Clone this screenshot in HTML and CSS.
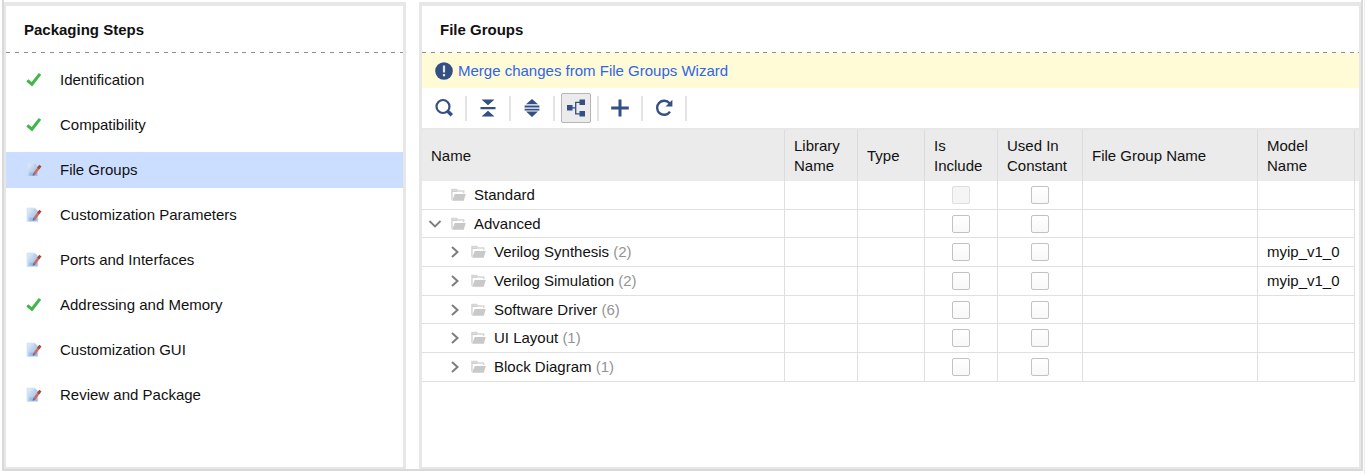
FILE: index.html
```html
<!DOCTYPE html>
<html lang="en">
<head>
<meta charset="utf-8">
<meta name="viewport" content="width=device-width, initial-scale=1">
<title>Package IP - File Groups</title>
<link rel="stylesheet" href="styles.css">
</head>
<body>
<svg class="symbols" aria-hidden="true">
  <defs>
    <linearGradient id="page-fill" x1="0" y1="0" x2="1" y2="1">
      <stop offset="0" stop-color="#e6f0fa"/><stop offset="1" stop-color="#8db4e2"/>
    </linearGradient>
  </defs>
  <symbol id="i-check" viewBox="0 0 16 16"><path d="M1.3 8.4 5.9 12.2 14 1.9" fill="none" stroke="#43b649" stroke-width="3.1"/></symbol>
  <symbol id="i-edit" viewBox="0 0 16 16">
    <path d="M1.2 1.2h7.6l3 3v10.3H1.2z" fill="url(#page-fill)" stroke="#cfdff0" stroke-width="1"/>
    <path d="M8.5 1.2v3.2h3.3z" fill="#b3cbe6"/>
    <path d="M3.5 10.5h7.8v3.5H3.5z" fill="#9bbce4"/>
    <path d="M8.2 12 13.2 5.2" stroke="#cd6a62" stroke-width="2.6"/>
    <path d="M12.2 6.4 14.4 3.6" stroke="#9c4a38" stroke-width="2.8"/>
    <path d="M6.6 13.8l.5-2.8 2.2 1.7z" fill="#5c6f92"/>
  </symbol>
  <symbol id="i-folder" viewBox="0 0 16 14">
    <path d="M1 12V1.2h5l1.3 1.6h6.2V5" fill="none" stroke="#d6d6d6" stroke-width="1.6"/>
    <path d="M1 2h5.5v1.8H1z" fill="#cfcfcf"/>
    <path d="M4 6h11.8L13.6 13H1.2z" fill="#c9c9c9"/>
  </symbol>
  <symbol id="i-down" viewBox="0 0 16 16"><path d="M2.5 5 8 10.5 13.5 5" fill="none" stroke="#7d7d7d" stroke-width="1.8"/></symbol>
  <symbol id="i-right" viewBox="0 0 16 16"><path d="M5 3 10.5 8 5 13" fill="none" stroke="#7d7d7d" stroke-width="2"/></symbol>
</svg>

<div class="frame">
  <nav class="panel steps" aria-labelledby="steps-title">
    <h2 class="panel-title" id="steps-title">Packaging Steps</h2>
    <ul class="step-list">
      <li><button class="step" type="button"><svg class="step-icon"><use href="#i-check"/></svg>Identification</button></li>
      <li><button class="step" type="button"><svg class="step-icon"><use href="#i-check"/></svg>Compatibility</button></li>
      <li><button class="step current" type="button" aria-current="step"><svg class="step-icon"><use href="#i-edit"/></svg>File Groups</button></li>
      <li><button class="step" type="button"><svg class="step-icon"><use href="#i-edit"/></svg>Customization Parameters</button></li>
      <li><button class="step" type="button"><svg class="step-icon"><use href="#i-edit"/></svg>Ports and Interfaces</button></li>
      <li><button class="step" type="button"><svg class="step-icon"><use href="#i-check"/></svg>Addressing and Memory</button></li>
      <li><button class="step" type="button"><svg class="step-icon"><use href="#i-edit"/></svg>Customization GUI</button></li>
      <li><button class="step" type="button"><svg class="step-icon"><use href="#i-edit"/></svg>Review and Package</button></li>
    </ul>
  </nav>

  <main class="panel groups">
    <h2 class="panel-title">File Groups</h2>
    <div class="notice">
      <svg class="notice-icon" viewBox="0 0 18 18" aria-hidden="true"><circle cx="9" cy="9" r="8.8" fill="#334f83"/><path d="M7.9 3.5h2.2v7H7.9zM7.9 12h2.2v2.3H7.9z" fill="#e4e6e4"/></svg>
      <a href="#merge">Merge changes from File Groups Wizard</a>
    </div>
    <div class="toolbar" role="toolbar" aria-label="File groups">
      <div class="tool"><button type="button" aria-label="Search"><svg viewBox="0 0 20 20"><circle cx="9" cy="8.5" r="6.5" fill="none" stroke="#334f83" stroke-width="2.2"/><path d="M13.5 13 17.8 17.3" stroke="#334f83" stroke-width="3.4"/></svg></button></div>
      <div class="tool"><button type="button" aria-label="Collapse all"><svg viewBox="0 0 20 20" fill="#334f83"><path d="M3.5 1.5h13L10 7.2zM3.5 18.5h13L10 12.8zM2.5 9h15v2.2h-15z"/></svg></button></div>
      <div class="tool"><button type="button" aria-label="Expand all"><svg viewBox="0 0 20 20" fill="#334f83"><path d="M10 1 16 6.2H4zM10 19 16 13.6H4zM2.6 7.6h14.8v1.8H2.6zM2.6 10.8h14.8v1.8H2.6z"/></svg></button></div>
      <div class="tool"><button type="button" class="pressed" aria-label="Group by category" aria-pressed="true"><svg viewBox="0 0 20 20" fill="#334f83"><path d="M1 7h5.5v5.5H1zM13.5 1.5H19V7h-5.5zM13.5 13H19v5.5h-5.5z"/><path d="M6 9.8h3M14 4.3H9.7v11.5H14" fill="none" stroke="#334f83" stroke-width="1.3"/></svg></button></div>
      <div class="tool"><button type="button" aria-label="Add"><svg viewBox="0 0 20 20"><path d="M10 1.5v17M1.2 10h17.6" stroke="#334f83" stroke-width="3"/></svg></button></div>
      <div class="tool"><button type="button" aria-label="Refresh"><svg viewBox="0 0 20 20"><path d="M16 13.6A7 7 0 1 1 15.5 5.3" fill="none" stroke="#334f83" stroke-width="2.4"/><path d="M18.4 1.8v6.8h-6.8z" fill="#334f83"/></svg></button></div>
    </div>

    <table class="files">
      <colgroup>
        <col><col class="c-library"><col class="c-type"><col class="c-include"><col class="c-used"><col class="c-group"><col class="c-model"><col class="c-end">
      </colgroup>
      <thead>
        <tr><th scope="col">Name</th><th scope="col">Library<br>Name</th><th scope="col">Type</th><th scope="col">Is<br>Include</th><th scope="col">Used In<br>Constant</th><th scope="col">File Group Name</th><th scope="col">Model<br>Name</th><td class="end"></td></tr>
      </thead>
      <tbody>
        <tr><td><div class="node"><span class="toggle"></span><svg class="folder"><use href="#i-folder"/></svg><span>Standard</span></div></td><td></td><td></td><td class="tick"><input type="checkbox" aria-label="Include Standard" disabled></td><td class="tick"><input type="checkbox" aria-label="Standard used in constant"></td><td></td><td></td><td class="end"></td></tr>
        <tr><td><div class="node"><button class="toggle" type="button" aria-label="Collapse Advanced" aria-expanded="true"><svg><use href="#i-down"/></svg></button><svg class="folder"><use href="#i-folder"/></svg><span>Advanced</span></div></td><td></td><td></td><td class="tick"><input type="checkbox" aria-label="Include Advanced"></td><td class="tick"><input type="checkbox" aria-label="Advanced used in constant"></td><td></td><td></td><td class="end"></td></tr>
        <tr><td><div class="node child"><button class="toggle" type="button" aria-label="Expand Verilog Synthesis" aria-expanded="false"><svg><use href="#i-right"/></svg></button><svg class="folder"><use href="#i-folder"/></svg><span>Verilog Synthesis <span class="count">(2)</span></span></div></td><td></td><td></td><td class="tick"><input type="checkbox" aria-label="Include Verilog Synthesis"></td><td class="tick"><input type="checkbox" aria-label="Verilog Synthesis used in constant"></td><td></td><td>myip_v1_0</td><td class="end"></td></tr>
        <tr><td><div class="node child"><button class="toggle" type="button" aria-label="Expand Verilog Simulation" aria-expanded="false"><svg><use href="#i-right"/></svg></button><svg class="folder"><use href="#i-folder"/></svg><span>Verilog Simulation <span class="count">(2)</span></span></div></td><td></td><td></td><td class="tick"><input type="checkbox" aria-label="Include Verilog Simulation"></td><td class="tick"><input type="checkbox" aria-label="Verilog Simulation used in constant"></td><td></td><td>myip_v1_0</td><td class="end"></td></tr>
        <tr><td><div class="node child"><button class="toggle" type="button" aria-label="Expand Software Driver" aria-expanded="false"><svg><use href="#i-right"/></svg></button><svg class="folder"><use href="#i-folder"/></svg><span>Software Driver <span class="count">(6)</span></span></div></td><td></td><td></td><td class="tick"><input type="checkbox" aria-label="Include Software Driver"></td><td class="tick"><input type="checkbox" aria-label="Software Driver used in constant"></td><td></td><td></td><td class="end"></td></tr>
        <tr><td><div class="node child"><button class="toggle" type="button" aria-label="Expand UI Layout" aria-expanded="false"><svg><use href="#i-right"/></svg></button><svg class="folder"><use href="#i-folder"/></svg><span>UI Layout <span class="count">(1)</span></span></div></td><td></td><td></td><td class="tick"><input type="checkbox" aria-label="Include UI Layout"></td><td class="tick"><input type="checkbox" aria-label="UI Layout used in constant"></td><td></td><td></td><td class="end"></td></tr>
        <tr><td><div class="node child"><button class="toggle" type="button" aria-label="Expand Block Diagram" aria-expanded="false"><svg><use href="#i-right"/></svg></button><svg class="folder"><use href="#i-folder"/></svg><span>Block Diagram <span class="count">(1)</span></span></div></td><td></td><td></td><td class="tick"><input type="checkbox" aria-label="Include Block Diagram"></td><td class="tick"><input type="checkbox" aria-label="Block Diagram used in constant"></td><td></td><td></td><td class="end"></td></tr>
      </tbody>
    </table>
  </main>
</div>
</body>
</html>
```
FILE: styles.css
```css
*,
*::before,
*::after {
  box-sizing: border-box;
}

body {
  display: flex;
  min-height: 100vh;
  margin: 0;
  padding: 0 1px 3px 2px;
  border-right: 1px solid #ececec;
  background: #fff;
  color: #111;
  font: 15px/20px "Liberation Sans", Arial, sans-serif;
}

button {
  padding: 0;
  border: 0;
  background: none;
  color: inherit;
  font: inherit;
}

svg {
  display: block;
  flex: none;
}

.symbols {
  position: absolute;
  width: 0;
  height: 0;
}

.frame {
  display: flex;
  flex: 1;
  gap: 13px;
  min-width: 0;
  padding-top: 2px;
  border: 2px solid #d9d9d9;
  border-top: 0;
}

.panel {
  border: solid #e7e7e7;
  border-width: 4px 3px 2px;
}

.steps {
  flex: none;
  width: 402px;
  border-left-width: 2px;
}

.groups {
  flex: 1;
  min-width: 0;
  border-right-width: 2px;
}

/* Four dashes fill each 35px tile of the rule under a title. */
.panel-title {
  height: 47px;
  margin: 0;
  padding: 14px 18px 0;
  background: linear-gradient(90deg, #8f8f8f 4px, transparent 4px 9px, #8f8f8f 9px 13px, transparent 13px 18px, #8f8f8f 18px 22px, transparent 22px 26px, #8f8f8f 26px 30px, transparent 30px) left bottom / 35px 1px repeat-x;
  font-size: 15px;
  font-weight: bold;
}

.step-list {
  display: grid;
  gap: 9px;
  margin: 0;
  padding: 9px 0;
  list-style: none;
}

.step {
  display: flex;
  align-items: center;
  gap: 18px;
  width: 100%;
  height: 36px;
  padding-left: 20px;
  text-align: left;
}

.step.current {
  background: #ccdeff;
}

.step-icon {
  width: 16px;
  height: 16px;
}

.notice {
  display: flex;
  align-items: center;
  gap: 5px;
  height: 35px;
  padding-left: 13px;
  background: #fffbd6;
}

.notice-icon {
  width: 18px;
  height: 18px;
}

.notice a {
  color: #2f64ee;
  text-decoration: none;
}

.toolbar {
  display: flex;
  gap: 6px;
  height: 42px;
  padding: 5px 7px;
  border-bottom: 2px solid #e7e7e7;
}

.tool {
  display: flex;
  align-items: center;
  gap: 6px;
  height: 30px;
}

.tool::after {
  content: "";
  width: 2px;
  height: 25px;
  background: #e3e3e3;
}

.tool button {
  display: grid;
  place-items: center;
  width: 30px;
  height: 30px;
  border-radius: 2px;
}

.tool svg {
  width: 20px;
  height: 20px;
}

.tool .pressed {
  border: 1px solid #b5b5b5;
  background: #ebebeb;
}

.files {
  width: 100%;
  border-spacing: 0;
  table-layout: fixed;
}

.c-library,
.c-include {
  width: 73px;
}

.c-type {
  width: 67px;
}

.c-used {
  width: 85px;
}

.c-group {
  width: 175px;
}

.c-model {
  width: 97px;
}

.c-end {
  width: 4px;
}

.files th,
.files td {
  padding: 0 0 0 9px;
  border-right: 1px solid #e0e0e0;
  text-align: left;
  white-space: nowrap;
}

.files thead th,
.files thead td {
  height: 51px;
  background: #ebebeb;
  border-right-color: #dcdcdc;
  font-weight: normal;
}

.files tbody td {
  height: 29px;
  border-bottom: 1px solid #e0e0e0;
}

.files tbody tr:nth-child(3n + 2) td {
  height: 28px;
}

.files td.end,
.files tbody td.end {
  padding: 0;
  border: 0;
}

.files td:first-child {
  padding-left: 5px;
}

.node {
  display: flex;
  align-items: center;
  gap: 8px;
}

.node.child {
  padding-left: 20px;
}

.toggle,
.toggle svg {
  width: 16px;
  height: 16px;
}

.folder {
  width: 15px;
  height: 14px;
}

.count {
  color: #949494;
}

.files td.tick {
  padding: 0;
  text-align: center;
}

.tick input {
  display: block;
  width: 18px;
  height: 18px;
  margin: 0 auto;
  border: 1px solid #c2c2c2;
  border-radius: 2px;
  background: linear-gradient(#fff, #f8f8f8);
  appearance: none;
}

.tick input:checked {
  background: #334f83;
}

.tick input:disabled {
  border-color: #dedede;
  background: #f5f5f5;
}
```
